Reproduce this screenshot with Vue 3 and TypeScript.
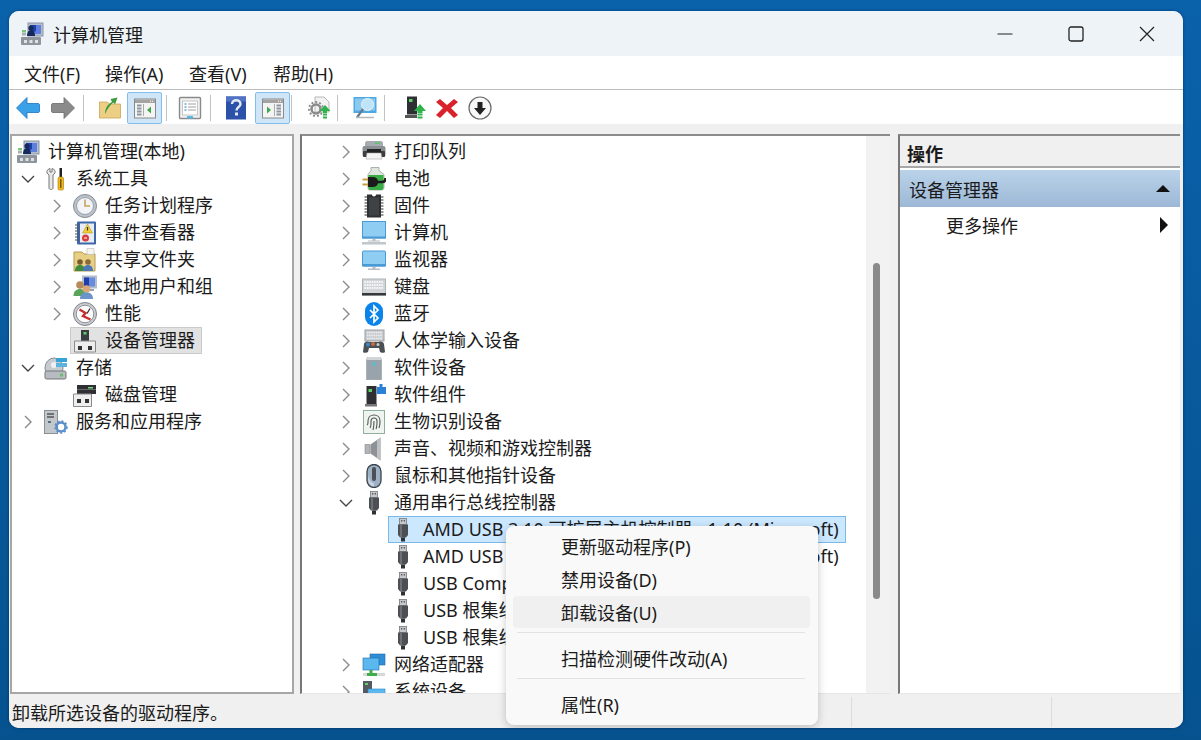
<template>
  <div class="desktop">
    <div class="window">
      <div class="titlebar">
        <svg class="ic title-ic" viewBox="0 0 24 24" v-html="icons.mgmt" />
        <span class="title-text">计算机管理</span>
        <div class="win-btns">
          <svg viewBox="0 0 16 16"><path d="M0.5 8h15" stroke="#222" stroke-width="1.2" fill="none" /></svg>
          <svg viewBox="0 0 16 16"><rect x="1" y="1" width="14" height="14" rx="2" stroke="#222" stroke-width="1.3" fill="none" /></svg>
          <svg viewBox="0 0 16 16"><path d="M1 1l14 14M15 1L1 15" stroke="#222" stroke-width="1.2" fill="none" /></svg>
        </div>
      </div>

      <div class="menubar">
        <span v-for="m in menus" :key="m">{{ m }}</span>
      </div>

      <div class="toolbar">
        <div v-for="(group, i) in toolGroups" :key="i" class="tb-group">
          <button v-for="t in group" :key="t.icon" class="tb-btn" :class="{ active: t.active }">
            <svg class="ic" viewBox="0 0 24 24" v-html="icons[t.icon]" />
          </button>
        </div>
      </div>

      <div class="panes">
        <div class="pane pane-left">
          <div v-for="row in leftRows" :key="row.text" class="row" :class="'lv' + row.level">
            <span v-if="row.level > 0" class="chev">
              <svg v-if="row.arrow === 'closed'" viewBox="0 0 18 18"><path d="M6 3l6 6-6 6" stroke="#8a8a8a" stroke-width="1.4" fill="none" /></svg>
              <svg v-if="row.arrow === 'open'" viewBox="0 0 18 18"><path d="M3 6l6 6 6-6" stroke="#444" stroke-width="1.4" fill="none" /></svg>
            </span>
            <span class="node" :class="{ 'sel-gray': row.selected }">
              <svg class="ic" viewBox="0 0 24 24" v-html="icons[row.icon]" />
              <span class="label">{{ row.text }}</span>
            </span>
          </div>
        </div>

        <div class="pane pane-main">
          <div class="tree-main">
            <div v-for="(row, i) in mainRows" :key="i" class="row" :class="'lv' + row.level">
              <span class="chev">
                <svg v-if="row.arrow === 'closed'" viewBox="0 0 18 18"><path d="M6 3l6 6-6 6" stroke="#8a8a8a" stroke-width="1.4" fill="none" /></svg>
                <svg v-if="row.arrow === 'open'" viewBox="0 0 18 18"><path d="M3 6l6 6 6-6" stroke="#444" stroke-width="1.4" fill="none" /></svg>
              </span>
              <span class="node" :class="{ 'sel-blue': row.selected }">
                <svg class="ic" viewBox="0 0 24 24" v-html="icons[row.icon]" />
                <span class="label">{{ row.text }}</span>
              </span>
            </div>
          </div>
          <div class="scrollbar"><div class="thumb"></div></div>
        </div>

        <div class="pane pane-right">
          <div class="act-head">操作</div>
          <div class="act-band">
            <span>设备管理器</span>
            <i class="tri-up"></i>
          </div>
          <div class="act-item">
            <span>更多操作</span>
            <i class="tri-right"></i>
          </div>
        </div>
      </div>

      <div class="statusbar">
        <span class="status-main">卸载所选设备的驱动程序。</span>
        <span class="status-cell wide"></span>
        <span class="status-cell"></span>
      </div>

      <div class="ctx-menu">
        <template v-for="item in ctxItems" :key="item.text">
          <div v-if="item.sep" class="ctx-sep"></div>
          <div class="ctx-item" :class="{ hover: item.hover }">{{ item.text }}</div>
        </template>
      </div>
    </div>
  </div>
</template>

<script setup lang="ts">
interface TreeRow {
  text: string
  icon: string
  level: number
  arrow?: 'open' | 'closed'
  selected?: boolean
}

interface ToolButton {
  icon: string
  active?: boolean
}

const menus = ['文件(F)', '操作(A)', '查看(V)', '帮助(H)']

const toolGroups: ToolButton[][] = [
  [{ icon: 'back' }, { icon: 'forward' }],
  [{ icon: 'upFolder' }, { icon: 'panelLeft', active: true }],
  [{ icon: 'props' }],
  [{ icon: 'help' }, { icon: 'panelRight', active: true }],
  [{ icon: 'gearDoc' }],
  [{ icon: 'scan' }],
  [{ icon: 'devUp' }, { icon: 'redX' }, { icon: 'downCircle' }]
]

const leftRows: TreeRow[] = [
  { text: '计算机管理(本地)', icon: 'mgmt', level: 0 },
  { text: '系统工具', icon: 'tools', level: 1, arrow: 'open' },
  { text: '任务计划程序', icon: 'clock', level: 2, arrow: 'closed' },
  { text: '事件查看器', icon: 'events', level: 2, arrow: 'closed' },
  { text: '共享文件夹', icon: 'shared', level: 2, arrow: 'closed' },
  { text: '本地用户和组', icon: 'users', level: 2, arrow: 'closed' },
  { text: '性能', icon: 'perf', level: 2, arrow: 'closed' },
  { text: '设备管理器', icon: 'devmgr', level: 2, selected: true },
  { text: '存储', icon: 'storage', level: 1, arrow: 'open' },
  { text: '磁盘管理', icon: 'disk', level: 2 },
  { text: '服务和应用程序', icon: 'services', level: 1, arrow: 'closed' }
]

const mainRows: TreeRow[] = [
  { text: '打印队列', icon: 'printer', level: 0, arrow: 'closed' },
  { text: '电池', icon: 'battery', level: 0, arrow: 'closed' },
  { text: '固件', icon: 'chip', level: 0, arrow: 'closed' },
  { text: '计算机', icon: 'computer', level: 0, arrow: 'closed' },
  { text: '监视器', icon: 'monitor', level: 0, arrow: 'closed' },
  { text: '键盘', icon: 'keyboard', level: 0, arrow: 'closed' },
  { text: '蓝牙', icon: 'bluetooth', level: 0, arrow: 'closed' },
  { text: '人体学输入设备', icon: 'hid', level: 0, arrow: 'closed' },
  { text: '软件设备', icon: 'softDev', level: 0, arrow: 'closed' },
  { text: '软件组件', icon: 'softComp', level: 0, arrow: 'closed' },
  { text: '生物识别设备', icon: 'finger', level: 0, arrow: 'closed' },
  { text: '声音、视频和游戏控制器', icon: 'sound', level: 0, arrow: 'closed' },
  { text: '鼠标和其他指针设备', icon: 'mouse', level: 0, arrow: 'closed' },
  { text: '通用串行总线控制器', icon: 'usb', level: 0, arrow: 'open' },
  { text: 'AMD USB 3.10 可扩展主机控制器 - 1.10 (Microsoft)', icon: 'usb', level: 1, selected: true },
  { text: 'AMD USB 3.10 可扩展主机控制器 - 1.10 (Microsoft)', icon: 'usb', level: 1 },
  { text: 'USB Composite Device', icon: 'usb', level: 1 },
  { text: 'USB 根集线器', icon: 'usb', level: 1 },
  { text: 'USB 根集线器 (USB 3.0)', icon: 'usb', level: 1 },
  { text: '网络适配器', icon: 'network', level: 0, arrow: 'closed' },
  { text: '系统设备', icon: 'system', level: 0, arrow: 'closed' }
]

const ctxItems = [
  { text: '更新驱动程序(P)' },
  { text: '禁用设备(D)' },
  { text: '卸载设备(U)', hover: true },
  { text: '扫描检测硬件改动(A)', sep: true },
  { text: '属性(R)', sep: true }
]

// every icon is drawn on a 24x24 box
const panel = (arrow: string) => `
  <rect x="1.500" y="3" width="21" height="19" fill="#f4f4f4" stroke="#8a8a8a"/>
  <rect x="2" y="3.500" width="20" height="3.500" fill="#a3a3a3"/>
  <path d="M17 5.250h1M19 5.250h1" stroke="#fff"/>
  ${arrow}`

const icons: Record<string, string> = {
  mgmt: `<rect x="8" y="1" width="15" height="13" fill="#b4bfcc" stroke="#8b96a5"/>
    <rect x="10" y="3" width="11" height="9" fill="#5f7fe0"/><path d="M10 3h6v6l-6 3z" fill="#1f3fa8"/>
    <circle cx="11" cy="6" r="2.600" fill="#142a5c"/><path d="M7 14c0-4 2-6 4-6s4 2 4 6z" fill="#142a5c"/>
    <rect x="1" y="15" width="20" height="8" rx="1" fill="#8f959c"/><path d="M4 18h3v3H4zM9.500 18h3v3h-3zM15 18h3v3h-3z" fill="#dfe2e5"/>
    <rect x="2" y="8" width="4" height="2.500" fill="#7bc47f"/><rect x="2" y="11" width="4" height="2.500" fill="#a8b0b0"/>`,
  tools: `<path d="M6 1.500C3.500 2 2.500 4 3 6l2 2v13c0 2 4 2 4 0V8l2-2c.500-2-.500-4-3-4.500V5H6z" fill="#e8e8e8" stroke="#777"/>
    <rect x="15.500" y="1" width="2.500" height="9" fill="#222"/><rect x="14" y="10" width="5.500" height="13" rx="1.500" fill="#f2b81c" stroke="#a67a00" stroke-width=".6"/><rect x="16" y="12" width="1.500" height="9" fill="#7a5a00"/>`,
  clock: `<circle cx="12" cy="12" r="11.500" fill="#bcc3cc" stroke="#868c94"/><circle cx="12" cy="12" r="8.500" fill="#f2f4f8" stroke="#9aa0a8"/>
    <path d="M12 5.500V12h5" stroke="#c9a25c" stroke-width="1.600" fill="none"/>`,
  events: `<rect x="4" y="0.500" width="19" height="23" rx="1" fill="#3e67a8"/><rect x="7" y="2.500" width="14" height="19" fill="#e8edf5"/>
    <path d="M2 4h4M2 7h4M2 10h4M2 13h4M2 16h4M2 19h4" stroke="#555" stroke-width="1.200"/>
    <path d="M14.500 3l5 9h-10z" fill="#f4cc33" stroke="#a88c1a" stroke-width=".5"/><path d="M14.500 6v3.500" stroke="#333" stroke-width="1.200"/>
    <circle cx="12.500" cy="17" r="3.500" fill="#d83a3a"/><path d="M11 17h3" stroke="#fff"/>`,
  shared: `<path d="M1 4h8l2 2h11v17H1z" fill="#e8cf86" stroke="#b59a4c"/><path d="M14 0.500h7v6h-7z" fill="#f5f5f0" stroke="#bbb" stroke-width=".6"/>
    <circle cx="7" cy="14" r="2.800" fill="#7a5b32"/><path d="M2 23c0-4 2-6 5-6s5 2 5 6z" fill="#3f8a3f"/>
    <circle cx="15" cy="14" r="2.800" fill="#8a6a3a"/><path d="M10 23c0-4 2-6 5-6s5 2 5 6z" fill="#4a78b8"/>`,
  users: `<rect x="9" y="0.500" width="15" height="13" fill="#b4bfcc"/><rect x="11" y="2.500" width="11" height="9" fill="#6a8ae0"/><path d="M11 2.500h5v9h-5z" fill="#1f3fa8"/>
    <rect x="12" y="14" width="9" height="2" fill="#9aa3ad"/>
    <circle cx="7" cy="10" r="3.800" fill="#b8895a"/><path d="M0.500 21c0-5 3-7 6.500-7s6 2 6 7z" fill="#5aa55a"/>
    <circle cx="13.500" cy="14" r="3.800" fill="#d8a878"/><path d="M7 24c0-5 3-6.500 6.500-6.500S20 19 20 24z" fill="#6a93c8"/>`,
  perf: `<circle cx="12" cy="12" r="11.500" fill="#c9cdd2" stroke="#7f848a"/><circle cx="12" cy="12" r="8.800" fill="#fbfbfb" stroke="#8d9197"/>
    <path d="M6.500 7.500l6 3.500-2.500 3 7.500 3.500" stroke="#c62f2f" stroke-width="2.400" fill="none"/><path d="M14 11.500l3-5" stroke="#333" stroke-width="1.300"/>`,
  devmgr: `<rect x="8" y="1" width="8" height="11" fill="#3a3d40"/><rect x="10.500" y="3" width="3" height="2.500" fill="#5fd06a"/>
    <path d="M1.500 12h21v11h-21z" fill="#eeeeee" stroke="#8a8a8a"/><path d="M5 17h4v4H5zM15 17h4v4h-4z" fill="#333"/>`,
  storage: `<ellipse cx="10" cy="12" rx="9" ry="10" fill="#c5cbd0" stroke="#858b91"/><circle cx="10" cy="9" r="3" fill="#eef0f2"/>
    <rect x="1" y="15" width="21" height="8" rx="1.500" fill="#b6bcc1" stroke="#777"/><rect x="16" y="17.500" width="3" height="3" fill="#6cbf6c"/>
    <rect x="12" y="2" width="11" height="4" fill="#35a3d8"/><rect x="12" y="7" width="11" height="4" fill="#5cb4dc"/>`,
  disk: `<rect x="4" y="2" width="19" height="9" fill="#2e3033"/><path d="M4 6.500h19" stroke="#6a6a6a"/><rect x="15" y="4" width="5" height="1.500" fill="#7bd47b"/>
    <path d="M0.500 11h18v12.500h-18z" fill="#eeeeee" stroke="#8a8a8a"/><path d="M4 16h4v4H4zM12 16h4v4h-4z" fill="#333"/>`,
  services: `<rect x="0.500" y="0.500" width="13" height="23" fill="#c2c7cc" stroke="#8a8f95"/><path d="M3 4h7M3 7h7" stroke="#555" stroke-width="1.300"/><rect x="4" y="11" width="3" height="2" fill="#5a6d80"/>
    <circle cx="17" cy="17" r="4.500" fill="none" stroke="#5b8fc9" stroke-width="2.500"/><circle cx="17" cy="17" r="6" fill="none" stroke="#5b8fc9" stroke-width="1.500" stroke-dasharray="2 2"/>`,
  printer: `<path d="M3 3c0-1 1-2 2-2h14c1 0 2 1 2 2v3H3z" fill="#a5abb0"/><rect x="13" y="2.500" width="5" height="1.500" fill="#54c46a"/>
    <rect x="0.500" y="6" width="23" height="11" rx="2" fill="#8a8f93"/><rect x="1" y="11" width="22" height="6" rx="1" fill="#3c3f42"/>
    <rect x="5" y="9" width="14" height="4" fill="#222"/><path d="M5 13h14l1 6H4z" fill="#f5f5f5" stroke="#aaa" stroke-width=".6"/>`,
  battery: `<path d="M9 0.500h8v3l5 4v13c0 1.500-1 2.500-2.500 2.500h-11C7 23.500 6 22.500 6 21V7.500l3-4z" fill="#dfe6df" stroke="#8a9a8a" stroke-width=".7"/><path d="M6.500 8h15v13c0 1-1 2-2 2h-11c-1 0-2-1-2-2z" fill="#37ad44"/>
    <path d="M0.500 12.500h6M0.500 17.500h6" stroke="#c9a040" stroke-width="2"/><path d="M6 10h5c4 0 5 3 5 5s-1 5-5 5H6z" fill="#1c1c1c"/><path d="M15 15h5c2.500 0 3.500-1.500 3.500-4" stroke="#1c1c1c" stroke-width="2.600" fill="none"/>`,
  chip: `<path d="M5 0.500h5c0 2.500 4 2.500 4 0h5v23H5z" fill="#2e3033"/><path d="M2.500 3h2.500M2.500 6h2.500M2.500 9h2.500M2.500 12h2.500M2.500 15h2.500M2.500 18h2.500M2.500 21h2.500M19 3h2.500M19 6h2.500M19 9h2.500M19 12h2.500M19 15h2.500M19 18h2.500M19 21h2.500" stroke="#777" stroke-width="1.400"/><rect x="7" y="3.500" width="10" height="18" fill="#4b4e52" opacity=".6"/>`,
  computer: `<rect x="0.500" y="0.500" width="23" height="16.500" fill="#8fcdf3" stroke="#4a9ad6"/><path d="M0 15.500h24v2H0z" fill="#4a9ad6"/>
    <rect x="10.500" y="18" width="3" height="2" fill="#b8bec4"/><rect x="6" y="19.500" width="12" height="1" fill="#b8bec4"/><rect x="0" y="21" width="24" height="2.500" fill="#bfc6cc"/>`,
  monitor: `<rect x="0.500" y="3" width="23" height="15" rx="1" fill="#8fcdf3" stroke="#4a9ad6"/><path d="M0 16h24v2.500H0z" fill="#4a9ad6"/>
    <rect x="10.500" y="19" width="3" height="2" fill="#b8bec4"/><rect x="6" y="20.500" width="12" height="1.500" fill="#b8bec4"/>`,
  keyboard: `<rect x="0.500" y="4" width="23" height="16" fill="#d2d5d8" stroke="#b0b3b6"/>
    <path d="M2.500 7h19M2.500 10h19M2.500 13h19" stroke="#f6f6f6" stroke-width="2" stroke-dasharray="1.600 .8"/><rect x="0" y="18" width="24" height="2.500" fill="#36383a"/>`,
  bluetooth: `<rect x="3" y="0" width="18" height="24" rx="9" fill="#0a84ea"/><path d="M8 8l8 8-4 4V4l4 4-8 8" stroke="#fff" stroke-width="1.700" fill="none"/>`,
  hid: `<rect x="3" y="1" width="19" height="11" fill="#c9ccd0" stroke="#9a9da1"/><path d="M5 3.500h15M5 6.500h15M5 9.500h15" stroke="#eee" stroke-width="1.600" stroke-dasharray="1.500 .7"/>
    <path d="M1 23l1-8c.3-2 3-3 5-2h10c2-1 4.700 0 5 2l1 8c0 1-4 1-5 0l-1-4H7l-1 4c-1 1-5 1-5 0z" fill="#4b5056"/><circle cx="6" cy="15.500" r="2" fill="#3f86c9"/><circle cx="11" cy="15" r="2" fill="#c96a3f"/><circle cx="16" cy="15.500" r="1.500" fill="#c9c9c9"/>`,
  softDev: `<path d="M5 1h14l1 3v20H4V4z" fill="#a9b2b9"/><path d="M5 4h14v19.500H5z" fill="#98a3ab"/><path d="M5.500 1h13l1 3H4.500z" fill="#d0d5d9"/><rect x="10.500" y="6.500" width="3" height="3" fill="#4ec3cf"/>`,
  softComp: `<rect x="4.500" y="3" width="10" height="18" fill="#2e3033"/><rect x="6.500" y="6" width="3.500" height="3" fill="#5fd06a"/><rect x="3" y="21" width="12" height="2.500" fill="#777"/>
    <path d="M15 4h2.500V1h3v3H24v7h-9z" fill="#2a82d8"/>`,
  finger: `<rect x="1.500" y="0.500" width="21" height="23" fill="#eef4ef" stroke="#8fb09a"/>
    <g fill="none" stroke="#555" stroke-width="1.100"><path d="M6 11c0-8 12-8 12 0"/><path d="M5 15c1.500-1 1-3 1-4M8 18c1.500-2 1-5 1-7 0-4 6-4 6 0 0 4 0 6-1 8"/><path d="M11 20c1-3 1-6 1-9"/><path d="M18 11c0 3 0 5-1 7"/></g>`,
  sound: `<path d="M3 7.500h5v9H3z" fill="#b3b6b9" stroke="#80838a" stroke-width=".6"/><path d="M8.500 7.500l10-7v23l-10-7z" fill="#8e9195"/><path d="M15 3l3.500-2.500v23L15 21z" fill="#bec1c4"/>`,
  mouse: `<rect x="5" y="0.500" width="14" height="23" rx="7" fill="#9db0c4" stroke="#39424c" stroke-width="1.300"/><rect x="10" y="3" width="4" height="14" rx="2" fill="#4b5058"/><path d="M6 12c0 5 1 10 6 10.500V19c-3 0-4-3-6-7z" fill="#c9d4df"/>`,
  usb: `<rect x="8.500" y="0.500" width="7" height="6" fill="#c5c8cc" stroke="#77797c" stroke-width=".8"/><path d="M10 2h1.300v1.500H10zM12.700 2H14v1.500h-1.300z" fill="#555"/>
    <path d="M7 6.500h10V17l-2 2.500H9L7 17z" fill="#4c4f53"/><path d="M9 6.500h2V19H9z" fill="#6d7075"/><rect x="10" y="19.500" width="4" height="4" fill="#2f3134"/>`,
  network: `<rect x="8" y="1" width="15" height="11" fill="#2e8fd6" stroke="#1e6aa8" stroke-width=".6"/><rect x="1" y="5" width="16" height="12" fill="#5ab8ee" stroke="#1e6aa8" stroke-width=".6"/>
    <rect x="7.500" y="17" width="3" height="3" fill="#3fae4a"/><rect x="1" y="20" width="22" height="3" fill="#d8d8d8"/><rect x="5" y="20" width="10" height="3" fill="#3fae4a"/>`,
  system: `<rect x="1" y="1" width="9" height="20" fill="#555a60"/><rect x="3" y="3" width="3" height="2" fill="#5fd06a"/>
    <rect x="6" y="9" width="17" height="12" fill="#5ab8ee" stroke="#2a86c8" stroke-width=".6"/>`,

  back: `<path d="M11 1.500v6h11c1 0 1.500.500 1.500 1.500v6c0 1-.500 1.500-1.500 1.500H11v6L0.500 12z" fill="#3aa0e8" stroke="#1c74c0" stroke-width=".8"/>`,
  forward: `<path d="M13 1.500v6H2c-1 0-1.500.500-1.500 1.500v6c0 1 .500 1.500 1.500 1.500h11v6L23.500 12z" fill="#8b8b8b" stroke="#6a6a6a" stroke-width=".8"/>`,
  upFolder: `<path d="M1.500 6h8l2 2h11v14h-21z" fill="#eccf84" stroke="#c9a655" stroke-width=".8"/>
    <path d="M7 18c0-6 3-10 7-12l-1.500-3 7-1.500-2.500 7-1.500-2c-3 2-6 6-8.500 11.500z" fill="#3c9b3c"/>`,
  panelLeft: panel(`<path d="M4 9.500h4.500M4 12.500h4.500M4 15.500h4.500M4 18.500h4.500" stroke="#8a95a0" stroke-width="1.800"/><path d="M10.500 8v12" stroke="#aaa"/><path d="M18 10.500v7l-4-3.500z" fill="#3fa84a"/>`),
  panelRight: panel(`<path d="M15.500 9.500H20M15.500 12.500H20M15.500 15.500H20M15.500 18.500H20" stroke="#8a95a0" stroke-width="1.800"/><path d="M13.500 8v12" stroke="#aaa"/><path d="M6 10.500v7l4-3.500z" fill="#3fa84a"/>`),
  props: `<rect x="1.500" y="1.500" width="21" height="21" rx="1" fill="#f2f2f2" stroke="#8a8a8a" stroke-width="1.400"/><rect x="4.500" y="5" width="15" height="14" fill="#fff" stroke="#c4c4c4"/>
    <path d="M6.500 8h2M6.500 11h2M6.500 14h2" stroke="#5aa8d8" stroke-width="1.500"/><path d="M10 8h8M10 11h8M10 14h8" stroke="#a0a0a0"/><rect x="9" y="20" width="6" height="2.500" fill="#58b8e0"/>`,
  help: `<rect x="2" y="0.500" width="20" height="23" fill="#2c51a8"/><path d="M2 0.500h20v5H2z" fill="#5073c4"/><path d="M8 8c0-5 8.500-5 8.500 0 0 3-4 3-4 6.500" fill="none" stroke="#e6e9f5" stroke-width="2.400"/><rect x="11" y="16.500" width="3" height="3" fill="#e6e9f5"/>`,
  gearDoc: `<path d="M8 1h9l5 5v10H8z" fill="#f2f2f2" stroke="#b8b8b8"/><circle cx="9" cy="13" r="4.500" fill="none" stroke="#8a8a8a" stroke-width="2.600"/><circle cx="9" cy="13" r="7" fill="none" stroke="#8a8a8a" stroke-width="1.800" stroke-dasharray="2 2"/>
    <path d="M18 9l5.500 6H20v2h-4v-2h-3.500z" fill="#2db34a"/><path d="M16 18.500h4M16 21.500h4" stroke="#2db34a" stroke-width="1.800"/>`,
  scan: `<rect x="0.500" y="1" width="23" height="16" fill="#4da8e4"/><rect x="2" y="2.500" width="20" height="12" fill="#8cc9ef"/><circle cx="14.500" cy="8.500" r="6" fill="#bfe3f7" stroke="#e8f5fc"/><path d="M10 13L4 21.500" stroke="#6a7a88" stroke-width="2.200"/><path d="M3 21.500h18" stroke="#b3b8bc" stroke-width="1.600"/>`,
  devUp: `<rect x="5" y="0.500" width="10" height="18" fill="#2e3033"/><rect x="7" y="3" width="3.500" height="3" fill="#5fd06a"/><rect x="3" y="19" width="12" height="3" fill="#555"/>
    <path d="M18 8l6 7h-3.500v2h-5v-2H12z" fill="#2db34a"/><path d="M15.500 18.500h5M15.500 21.500h5" stroke="#2db34a" stroke-width="1.800"/>`,
  redX: `<path d="M5 3l7 6 7-6 4 3-7 6 7 7-4 3-7-7-7 7-4-3 7-7-7-6z" fill="#d8232c"/>`,
  downCircle: `<circle cx="12" cy="12" r="11" fill="#f9f9f9" stroke="#6a6a6a" stroke-width="1.200"/><path d="M9.500 6h5v6H18l-6 7-6-7h3.500z" fill="#222"/>`
}
</script>

<style scoped>
.desktop {
  box-sizing: border-box;
  height: 740px;
  padding: 11px 18px 12px 9px;
  background: linear-gradient(180deg, #0a62ab 0%, #05528f 100%);
  font-family: "Noto Sans", "Noto Sans CJK SC", sans-serif;
  font-size: 18px;
  color: #1b1b1b;
}

.window {
  position: relative;
  display: flex;
  flex-direction: column;
  height: 100%;
  background: #f0f0f0;
  border-radius: 10px;
  overflow: hidden;
  box-shadow: 0 0 3px rgba(0, 30, 70, 0.6);
}

.ic {
  display: block;
  width: 24px;
  height: 24px;
  flex: none;
}

.titlebar {
  display: flex;
  align-items: center;
  height: 45px;
  flex: none;
  padding-left: 12px;
  background: #eef3f8;
}

.title-ic {
  margin-left: -1px;
}

.title-text {
  margin-left: 9px;
}

.win-btns {
  display: flex;
  gap: 55px;
  margin-left: auto;
  margin-right: 28px;
}

.win-btns svg {
  display: block;
  width: 16px;
  height: 16px;
}

.menubar {
  display: flex;
  align-items: center;
  height: 33px;
  flex: none;
  padding-left: 15px;
  background: #fff;
  border-bottom: 1px solid #bcbcbc;
}

.menubar span {
  width: 84px;
}

.menubar span:first-child {
  width: 81px;
}

.toolbar {
  display: flex;
  align-items: flex-end;
  height: 34px;
  flex: none;
  padding-left: 1px;
  background: #fff;
}

.tb-group {
  display: flex;
  align-items: center;
}

.tb-group::after {
  content: "";
  width: 1px;
  height: 26px;
  background: #c2c2c2;
}

.tb-group:nth-child(1)::after { margin-left: 3px; }
.tb-group:nth-child(2) { padding-left: 8px; }
.tb-group:nth-child(2)::after { margin-left: 4px; }
.tb-group:nth-child(3) { padding-left: 5px; }
.tb-group:nth-child(3)::after { margin-left: 3px; }
.tb-group:nth-child(4) { padding-left: 7px; }
.tb-group:nth-child(4) .tb-btn + .tb-btn { margin-left: 2px; }
.tb-group:nth-child(4)::after { margin-left: 1px; }
.tb-group:nth-child(5) { padding-left: 9px; }
.tb-group:nth-child(5)::after { margin-left: 1px; }
.tb-group:nth-child(6) { padding-left: 9px; }
.tb-group:nth-child(6)::after { margin-left: 2px; }
.tb-group:nth-child(7) { padding-left: 12px; }
.tb-group:nth-child(7)::after { display: none; }
.tb-group:nth-child(7) .tb-btn { width: 33px; }

.tb-btn {
  display: flex;
  align-items: center;
  justify-content: center;
  box-sizing: border-box;
  width: 35px;
  height: 32px;
  padding: 0;
  background: none;
  border: 1px solid transparent;
  border-radius: 2px;
}

.tb-btn.active {
  background: #cfe6f8;
  border-color: #86bde8;
}

.panes {
  display: flex;
  flex: 1;
  min-height: 0;
  padding: 10px 3px 1px 1px;
}

.pane {
  box-sizing: border-box;
  background: #fff;
  overflow: hidden;
}

.pane-left {
  width: 284px;
  padding-top: 2px;
  border: 2px solid #a6a6a6;
}

.pane-main {
  display: flex;
  width: 590px;
  margin-left: 6px;
  border-top: 2px solid #8c8c8c;
  border-left: 2px solid #777;
  border-bottom: 1px solid #e6e6e6;
}

.tree-main {
  flex: 1;
  min-width: 0;
  padding-top: 2px;
  overflow: hidden;
}

.scrollbar {
  width: 24px;
  flex: none;
  padding-top: 127px;
  background: #f2f2f2;
  box-sizing: border-box;
}

.thumb {
  width: 7px;
  height: 336px;
  margin-left: 7px;
  background: #8a8a8a;
  border-radius: 4px;
}

.row {
  display: flex;
  align-items: center;
  height: 27px;
  white-space: nowrap;
}

.pane-left .lv0 { padding-left: 1px; }
.pane-left .lv1 { padding-left: 7px; }
.pane-left .lv2 { padding-left: 36px; }
.pane-main .lv0 { padding-left: 35px; }
.pane-main .lv1 { padding-left: 64px; }

.chev {
  display: block;
  width: 18px;
  height: 18px;
  flex: none;
  margin-right: 4px;
}

.chev svg {
  display: block;
  width: 18px;
  height: 18px;
}

.node {
  display: flex;
  align-items: center;
  box-sizing: border-box;
  height: 27px;
  padding: 0 6px 0 2px;
  border: 1px solid transparent;
}

.label {
  margin-left: 8px;
  line-height: 25px;
}

.sel-gray {
  background: #e2e2e2;
  border-color: #cacaca;
}

.sel-blue {
  background: #cce8ff;
  border-color: #7ab8e8;
}

.pane-right {
  width: 282px;
  margin-left: 8px;
  border-top: 2px solid #8c8c8c;
  border-left: 2px solid #777;
  border-bottom: 1px solid #e6e6e6;
}

.act-head {
  box-sizing: border-box;
  height: 32px;
  padding-left: 7px;
  line-height: 36px;
  font-weight: 700;
  background: #f0f0f0;
  border-bottom: 2px solid #a8a8a8;
}

.act-band {
  display: flex;
  align-items: center;
  justify-content: space-between;
  height: 37px;
  margin-top: 2px;
  padding: 0 10px 0 9px;
  background: linear-gradient(180deg, #bad3ea 0%, #9db8d6 100%);
}

.act-item {
  display: flex;
  align-items: center;
  justify-content: space-between;
  height: 36px;
  padding: 0 12px 0 46px;
}

.tri-up {
  width: 0;
  height: 0;
  border: 7px solid transparent;
  border-top: none;
  border-bottom: 7px solid #111;
}

.tri-right {
  width: 0;
  height: 0;
  border: 8px solid transparent;
  border-right: none;
  border-left: 8px solid #111;
}

.statusbar {
  display: flex;
  align-items: center;
  height: 33px;
  flex: none;
  background: #f0f0f0;
}

.status-main {
  box-sizing: border-box;
  width: 842px;
  padding-left: 3px;
}

.status-cell {
  box-sizing: border-box;
  height: 30px;
  width: 127px;
  border-left: 1px solid #dcdcdc;
}

.status-cell.wide {
  width: 200px;
}

.ctx-menu {
  position: absolute;
  left: 497px;
  top: 515px;
  box-sizing: border-box;
  width: 312px;
  height: 199px;
  padding-top: 4px;
  background: #f9f9f9;
  border-radius: 8px;
  box-shadow: 0 2px 8px rgba(0, 0, 0, 0.22);
}

.ctx-item {
  height: 33px;
  margin: 0 8px 0 7px;
  padding-left: 48px;
  line-height: 34px;
  border-radius: 4px;
}

.ctx-item.hover {
  height: 32px;
  margin-bottom: 1px;
  background: #f0f0f0;
}

.ctx-sep {
  height: 1px;
  margin: 3.5px 13px 9px 11px;
  background: #e2e2e2;
}
</style>
